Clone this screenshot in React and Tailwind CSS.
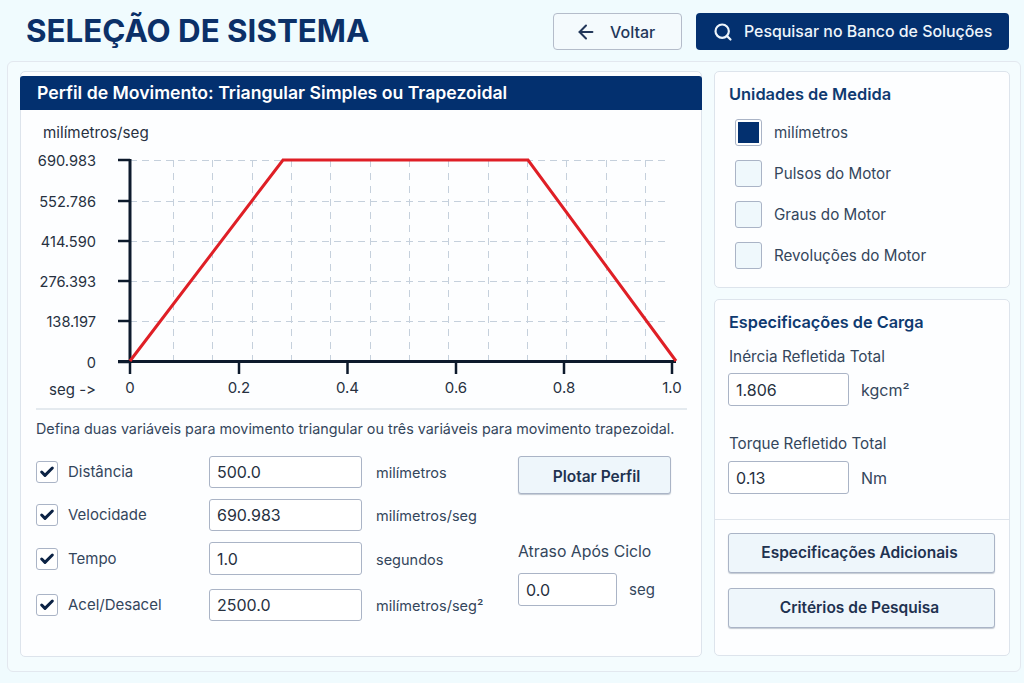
import { ArrowLeft, Search, Check } from "lucide-react";

const gridX = [173, 212, 252, 291, 330, 370, 409, 448, 488, 527, 566, 606, 645];
const gridY = [160, 201, 241, 281, 321];
const yLabels = [
  ["690.983", 160],
  ["552.786", 201],
  ["414.590", 241],
  ["276.393", 281],
  ["138.197", 321],
  ["0", 362],
];
const xLabels = [
  ["0", 130],
  ["0.2", 239],
  ["0.4", 347.5],
  ["0.6", 456],
  ["0.8", 564],
  ["1.0", 672],
];

const variables = [
  { label: "Distância", value: "500.0", unit: "milímetros", row: "h-[32px]", unitPos: "pt-[2px]" },
  { label: "Velocidade", value: "690.983", unit: "milímetros/seg", row: "h-[32px] mt-[11px]", unitPos: "pt-[1px]" },
  { label: "Tempo", value: "1.0", unit: "segundos", row: "h-[33px] mt-[11px]", unitPos: "pt-[2px]" },
  { label: "Acel/Desacel", value: "2500.0", unit: "milímetros/seg²", row: "h-[32px] mt-[14px]", unitPos: "pt-[1px]" },
];

const units = ["milímetros", "Pulsos do Motor", "Graus do Motor", "Revoluções do Motor"];

function Chart() {
  // viewBox uses page coordinates so the numbers can be read straight off the screenshot
  return (
    <svg width="680" height="298" viewBox="21 110 680 298" className="block [font-feature-settings:'calt'_0]" style={{ fontFamily: "Inter, sans-serif" }}>
      <text x="43" y="138" fontSize="15.2" fill="#27313f">milímetros/seg</text>
      {gridX.map((x) => (
        <line key={x} x1={x + 0.5} y1="160" x2={x + 0.5} y2="361" stroke="#c5d0dc" strokeWidth="1" strokeDasharray="7 6" />
      ))}
      {gridY.map((y) => (
        <line key={y} x1="130" y1={y + 0.5} x2="665" y2={y + 0.5} stroke="#c5d0dc" strokeWidth="1" strokeDasharray="7 5" />
      ))}
      {yLabels.map(([t, y]) => (
        <g key={t}>
          <line x1="118" y1={y} x2="130" y2={y} stroke="#0d1a2c" strokeWidth="2.5" />
          <text x="96" y={y + 6} fontSize="14.6" textAnchor="end" fill="#27313f">{t}</text>
        </g>
      ))}
      {xLabels.map(([t, x]) => (
        <g key={t}>
          <line x1={x} y1="361" x2={x} y2="374" stroke="#0d1a2c" strokeWidth="2.5" />
          <text x={x} y="393" fontSize="15" textAnchor="middle" fill="#27313f">{t}</text>
        </g>
      ))}
      <text x="96" y="395" fontSize="15" textAnchor="end" fill="#27313f">seg -&gt;</text>
      <line x1="130" y1="159" x2="130" y2="362" stroke="#0d1a2c" strokeWidth="3" />
      <line x1="118" y1="361.5" x2="676" y2="361.5" stroke="#0d1a2c" strokeWidth="3" />
      <polyline points="130,361 283,160 528,160 676,361" fill="none" stroke="#df1f26" strokeWidth="3" />
    </svg>
  );
}

function VariableRow({ label, value, unit, row, unitPos }) {
  return (
    <div className={`flex items-center ${row}`}>
      <span className="flex h-[22px] w-[22px] items-center justify-center rounded-[3px] border border-[#aab4c6] bg-white">
        <Check size={16} strokeWidth={4.5} className="text-[#0b2244]" />
      </span>
      <span className="ml-[10px] w-[141px] pt-[1px] text-[15px] text-[#34465c]">{label}</span>
      <span className="flex h-full w-[153px] items-center rounded-[3px] border border-[#aab4c6] bg-white pl-[7px] text-[16px] text-[#27313f]">
        {value}
      </span>
      <span className={`ml-[14px] text-[14.5px] text-[#34465c] ${unitPos}`}>{unit}</span>
    </div>
  );
}

function SoftButton({ children, className }) {
  return (
    <button className={`flex items-center justify-center rounded-[3px] border border-[#aab4c6] bg-[#eef6fb] text-[15.5px] font-semibold text-[#1f3250] shadow-[0_1px_1px_rgba(90,105,130,0.35)] ${className}`}>
      {children}
    </button>
  );
}

function ValueField({ value, unit, className }) {
  return (
    <div className={`-ml-px flex items-center ${className}`}>
      <span className="flex h-full w-[121px] items-center rounded-[3px] border border-[#aab4c6] bg-white pl-[7px] text-[16px] text-[#27313f]">
        {value}
      </span>
      <span className="ml-[12px] text-[16px] text-[#34465c]">{unit}</span>
    </div>
  );
}

export default function App() {
  return (
    <div className="flex h-[683px] w-[1024px] flex-col overflow-hidden bg-[#f0fbfe] font-['Inter',sans-serif]">
      {/* top bar */}
      <div className="flex h-[61px] shrink-0 items-start justify-between pl-[26px] pr-[15px] pt-[13px]">
        <h1 className="text-[31.3px] font-bold leading-[37px] text-[#0b3068]">SELEÇÃO DE SISTEMA</h1>
        <div className="flex gap-[14px]">
          <button className="flex h-[37px] w-[129px] items-center rounded-[4px] border border-[#b4bcca] bg-[#f4fafd] pl-[21px] text-[16px] font-medium text-[#22375a]">
            <ArrowLeft size={22} strokeWidth={2.2} />
            <span className="ml-[13px]">Voltar</span>
          </button>
          <button className="flex h-[37px] w-[313px] items-center rounded-[4px] bg-[#03306f] pl-[17px] text-[15.9px] font-medium text-[#eef5fb]">
            <Search size={20} strokeWidth={2.6} />
            <span className="ml-[11px]">Pesquisar no Banco de Soluções</span>
          </button>
        </div>
      </div>

      {/* main frame */}
      <div className="ml-[7px] flex h-[611px] w-[1014px] gap-[12px] rounded-[6px] border border-[#e3e8ef] bg-[#f4fcfe] pl-[12px] pt-[9px]">
        {/* left panel */}
        <div className="h-[586px] w-[682px] rounded-[5px] border border-[#dde4ec] bg-[#fdfeff]">
          <div className="ml-[-1px] mt-[4px] flex h-[34px] w-[682px] items-center rounded-t-[3px] bg-[#03306f] pl-[17px] text-[17.65px] font-semibold text-white">
            Perfil de Movimento: Triangular Simples ou Trapezoidal
          </div>
          <Chart />
          <div className="ml-[15px] mr-[14px] h-[2px] bg-[#e4eaef]" />
          <p className="ml-[15px] mt-[10px] whitespace-nowrap text-[14.33px] leading-[18px] text-[#34465c]">
            Defina duas variáveis para movimento triangular ou três variáveis para movimento trapezoidal.
          </p>
          <div className="ml-[15px] mt-[18px] flex">
            <div className="w-[482px]">
              {variables.map((v) => (
                <VariableRow key={v.label} {...v} />
              ))}
            </div>
            <div className="w-[153px]">
              <SoftButton className="h-[38px] w-[153px] pl-[4px] pt-[3px]">Plotar Perfil</SoftButton>
              <div className="mt-[49px] text-[15.8px] leading-[18px] text-[#34465c]">Atraso Após Ciclo</div>
              <div className="mt-[12px] flex h-[33px] items-center">
                <span className="flex h-full w-[99px] items-center rounded-[3px] border border-[#aab4c6] bg-white pl-[7px] text-[16px] text-[#27313f]">
                  0.0
                </span>
                <span className="ml-[12px] pt-[1px] text-[15px] text-[#34465c]">seg</span>
              </div>
            </div>
          </div>
        </div>

        {/* right column */}
        <div className="flex w-[296px] flex-col gap-[11px]">
          <div className="h-[217px] rounded-[5px] border border-[#dde4ec] bg-[#fdfeff] pl-[14px] pt-[12px]">
            <h2 className="text-[16.4px] font-semibold leading-[20px] text-[#0f3a70]">Unidades de Medida</h2>
            <div className="ml-[6px] mt-[15px] flex flex-col gap-[14px]">
              {units.map((u, i) => (
                <div key={u} className="flex items-center">
                  <span className={`flex h-[27px] w-[27px] items-center justify-center rounded-[3px] border border-[#aab4c6] ${i === 0 ? "bg-white" : "bg-[#eff8fc]"}`}>
                    {i === 0 && <span className="h-[21px] w-[21px] bg-[#03306f]" />}
                  </span>
                  <span className="ml-[12px] pt-[2px] text-[15.2px] text-[#34465c]">{u}</span>
                </div>
              ))}
            </div>
          </div>

          <div className="h-[357px] rounded-[5px] border border-[#dde4ec] bg-[#fdfeff] pt-[12px]">
            <div className="pl-[14px]">
              <h2 className="text-[16.25px] font-semibold leading-[20px] text-[#0f3a70]">Especificações de Carga</h2>
              <div className="mt-[16px] text-[15.3px] leading-[18px] text-[#34465c]">Inércia Refletida Total</div>
              <ValueField value="1.806" unit="kgcm²" className="mt-[7px] h-[33px]" />
              <div className="mt-[29px] text-[15.2px] leading-[18px] text-[#34465c]">Torque Refletido Total</div>
              <ValueField value="0.13" unit="Nm" className="mt-[8px] h-[33px]" />
            </div>
            <div className="mt-[25px] h-px bg-[#dfe5ec]" />
            <div className="ml-[13px] mt-[13px] flex w-[267px] flex-col gap-[15px]">
              <SoftButton className="h-[40px] pr-[4px]">Especificações Adicionais</SoftButton>
              <SoftButton className="h-[40px] pr-[4px]">Critérios de Pesquisa</SoftButton>
            </div>
          </div>
        </div>
      </div>
    </div>
  );
}
